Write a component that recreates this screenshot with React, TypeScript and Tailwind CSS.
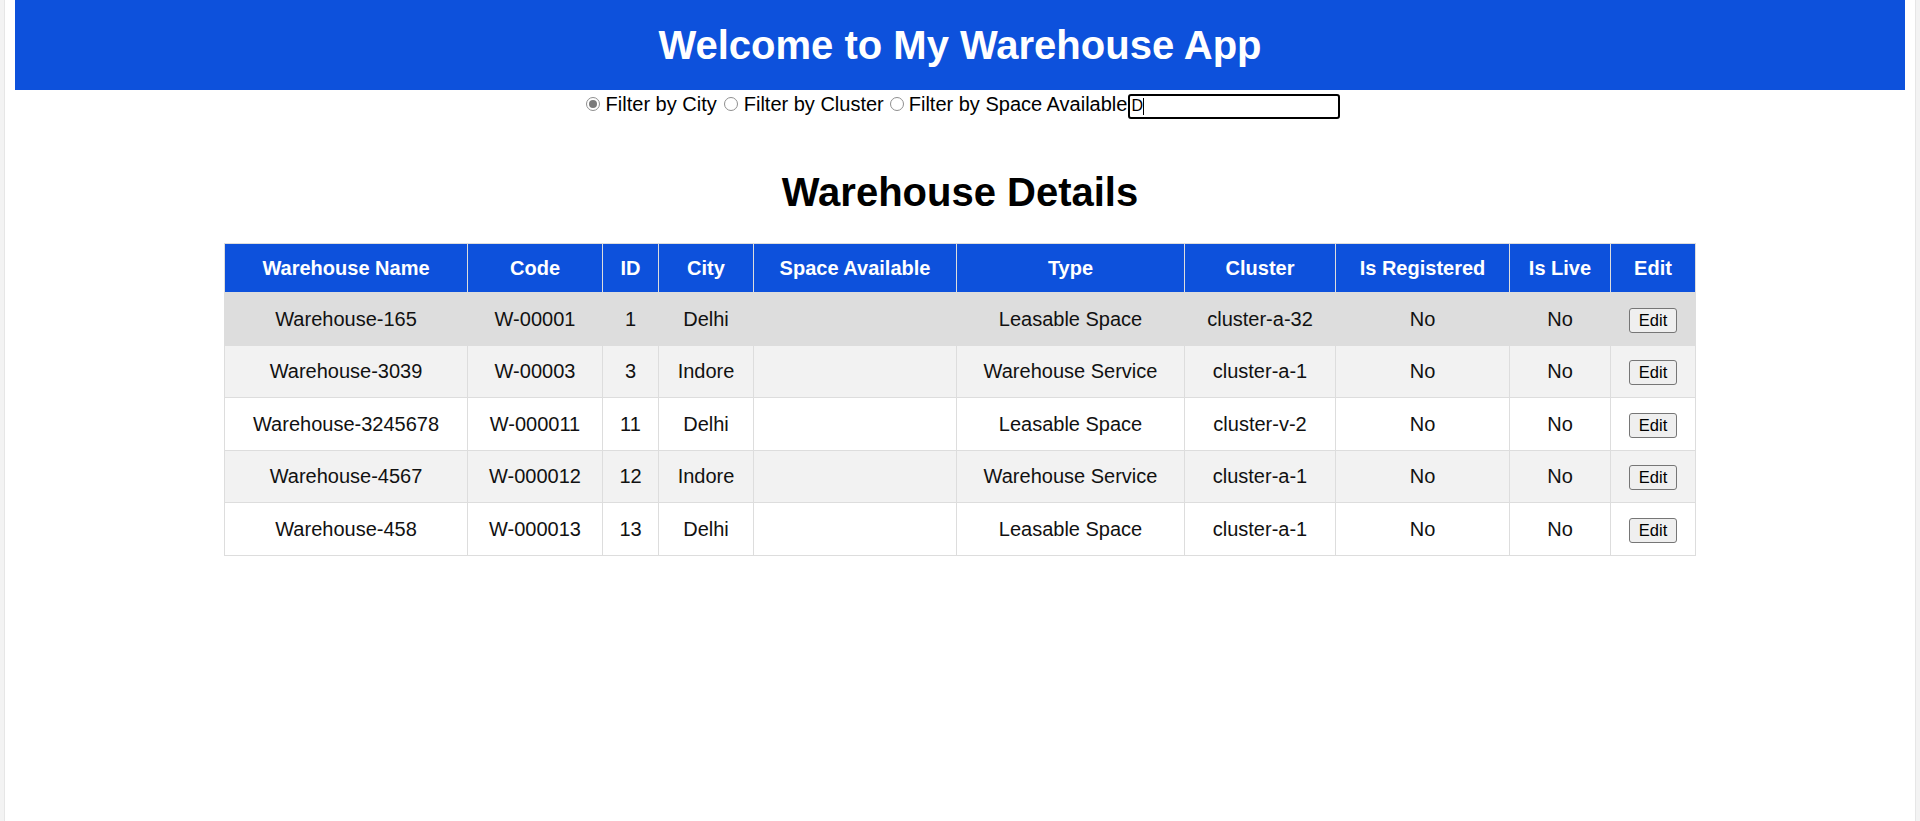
import React from "react";

type Row = {
  name: string;
  code: string;
  id: string;
  city: string;
  space: string;
  type: string;
  cluster: string;
  reg: string;
  live: string;
};

const rows: Row[] = [
  { name: "Warehouse-165", code: "W-00001", id: "1", city: "Delhi", space: "", type: "Leasable Space", cluster: "cluster-a-32", reg: "No", live: "No" },
  { name: "Warehouse-3039", code: "W-00003", id: "3", city: "Indore", space: "", type: "Warehouse Service", cluster: "cluster-a-1", reg: "No", live: "No" },
  { name: "Warehouse-3245678", code: "W-000011", id: "11", city: "Delhi", space: "", type: "Leasable Space", cluster: "cluster-v-2", reg: "No", live: "No" },
  { name: "Warehouse-4567", code: "W-000012", id: "12", city: "Indore", space: "", type: "Warehouse Service", cluster: "cluster-a-1", reg: "No", live: "No" },
  { name: "Warehouse-458", code: "W-000013", id: "13", city: "Delhi", space: "", type: "Leasable Space", cluster: "cluster-a-1", reg: "No", live: "No" },
];

const rowBg = ["bg-[#dddddd]", "bg-[#f2f2f2]", "bg-white", "bg-[#f2f2f2]", "bg-white"];

function Radio({ checked }: { checked?: boolean }) {
  return (
    <span className="inline-flex items-center justify-center w-[14px] h-[14px] rounded-full border border-[#8f8f8f] bg-white shrink-0">
      {checked ? <span className="block w-[8px] h-[8px] rounded-full bg-[#7a7a7a]" /> : null}
    </span>
  );
}

const headers = ["Warehouse Name", "Code", "ID", "City", "Space Available", "Type", "Cluster", "Is Registered", "Is Live", "Edit"];
const widths = ["w-[243px]", "w-[135px]", "w-[56px]", "w-[95px]", "w-[203px]", "w-[228px]", "w-[151px]", "w-[174px]", "w-[101px]", "w-[85px]"];

export default function App() {
  return (
    <div className="min-h-screen bg-[#f3f3f3] px-[4px] font-['Liberation_Sans',Arial,sans-serif] text-[#111]">
      <div className="min-h-screen bg-white border-x border-[#e6e6e6] px-[10px]">
        <header className="h-[90px] bg-[#0d51dc] flex items-center justify-center">
          <h1 className="text-white font-bold text-[40px] leading-none">Welcome to My Warehouse App</h1>
        </header>

        <div className="mt-[3px] h-[26px] pl-[6px] flex items-center justify-center text-[20px] leading-none text-black">
          <label className="flex items-center mb-[4px]">
            <Radio checked />
            <span className="ml-[6px]">Filter by City</span>
          </label>
          <label className="flex items-center ml-[7px] mb-[4px]">
            <Radio />
            <span className="ml-[6px]">Filter by Cluster</span>
          </label>
          <label className="flex items-center ml-[6px] mb-[4px]">
            <Radio />
            <span className="ml-[5px]">Filter by Space Available</span>
          </label>
          <div className="ml-[1px] w-[212px] h-[25px] border-2 border-black rounded-[3px] flex items-center px-[1px] text-[16px] bg-white">
            <span>D</span>
            <span className="block w-[1px] h-[17px] bg-black" />
          </div>
        </div>

        <h2 className="mt-[50px] text-center font-bold text-[40px] leading-[46px] text-black">Warehouse Details</h2>

        <table className="mt-[28px] mx-auto w-[1471px] table-fixed border-collapse text-[20px]">
          <colgroup>
            {widths.map((w, i) => (
              <col key={i} className={w} />
            ))}
          </colgroup>
          <thead>
            <tr className="h-[49px] bg-[#0d51dc]">
              {headers.map((h) => (
                <th key={h} className="border border-[#dddddd] text-white font-bold text-center px-[6px]">
                  {h}
                </th>
              ))}
            </tr>
          </thead>
          <tbody>
            {rows.map((r, i) => (
              <tr key={r.name} className={`h-[52.5px] ${rowBg[i]}`}>
                <td className="border border-[#dddddd] text-center">{r.name}</td>
                <td className="border border-[#dddddd] text-center">{r.code}</td>
                <td className="border border-[#dddddd] text-center">{r.id}</td>
                <td className="border border-[#dddddd] text-center">{r.city}</td>
                <td className="border border-[#dddddd] text-center">{r.space}</td>
                <td className="border border-[#dddddd] text-center">{r.type}</td>
                <td className="border border-[#dddddd] text-center">{r.cluster}</td>
                <td className="border border-[#dddddd] text-center">{r.reg}</td>
                <td className="border border-[#dddddd] text-center">{r.live}</td>
                <td className="border border-[#dddddd] text-center">
                  <button className="h-[25px] px-[9px] text-[16.5px] leading-none border border-[#767676] rounded-[3px] bg-[#efefef] text-black">
                    Edit
                  </button>
                </td>
              </tr>
            ))}
          </tbody>
        </table>
      </div>
    </div>
  );
}
